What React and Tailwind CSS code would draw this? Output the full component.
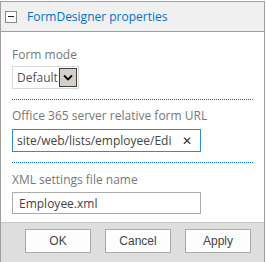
import { useState } from "react";

const font = { fontFamily: '"Open Sans", "Liberation Sans", sans-serif' };

const Dots = () => (
  <div className="w-[241px] h-px bg-[linear-gradient(to_right,#0072c6_1px,transparent_1px)] bg-[length:2px_1px]" />
);

export default function App() {
  const [mode, setMode] = useState("Default");
  const [url, setUrl] = useState("site/web/lists/employee/Edi");
  const [xml, setXml] = useState("Employee.xml");

  return (
    <div
      className="mt-px w-[265px] h-[261px] bg-white border-x border-t border-[#a0a0a0] flex flex-col"
      style={font}
    >
      {/* header */}
      <div className="h-[30px] bg-[#f0f0f0] border-b border-[#a0a0a0] flex items-center pl-[4px]">
        <div className="w-[12px] h-[12px] border border-[#8a8a8a] bg-white flex items-center justify-center">
          <div className="w-[6px] h-px bg-[#222]" />
        </div>
        <span className="ml-[10px] text-[12px] text-[#0072c6] leading-none">
          FormDesigner properties
        </span>
      </div>

      {/* body */}
      <div className="flex-1 pl-[11px] flex flex-col">
        <div className="mt-[14px] text-[12px] leading-[17px] text-[#777]">Form mode</div>
        <div className="mt-[3px] w-[67px] h-[23px] border border-[#d8d8d8] flex items-center">
          <span className="pl-[4px] text-[12px] text-[#555] flex-1">{mode}</span>
          <button
            className="w-[18px] h-[19px] mr-px bg-[#d4d0c8] border border-[#404040] flex items-center justify-center"
            onClick={() => setMode(mode)}
          >
            <svg width="10" height="7" viewBox="0 0 10 7">
              <path d="M1 1.5 L5 5.5 L9 1.5" fill="none" stroke="#000" strokeWidth="1.8" />
            </svg>
          </button>
        </div>

        <div className="mt-[10px]">
          <Dots />
        </div>

        <div className="mt-[7px] text-[12px] leading-[17px] text-[#777]">
          Office 365 server relative form URL
        </div>
        <div className="mt-[5px] w-[189px] h-[23px] border border-[#2a8dd4] flex items-center">
          <input
            className="pl-[4px] w-[168px] text-[12px] text-[#444] outline-none bg-transparent"
            value={url}
            onChange={(e) => setUrl(e.target.value)}
          />
          <span className="ml-[1px] text-[12px] text-[#333] leading-none">✕</span>
        </div>

        <div className="mt-[10px]">
          <Dots />
        </div>

        <div className="mt-[8px] text-[12px] leading-[17px] text-[#777]">
          XML settings file name
        </div>
        <input
          className="mt-[4px] w-[189px] h-[22px] border border-[#ababab] pl-[6px] text-[12px] text-[#444] outline-none"
          value={xml}
          onChange={(e) => setXml(e.target.value)}
        />
      </div>

      {/* footer */}
      <div className="h-[40px] bg-[#dedede] border-t border-[#c8c8c8] flex items-start pt-[6px] pl-[24px] gap-[14px]">
        {["OK", "Cancel", "Apply"].map((label) => (
          <button
            key={label}
            className="w-[66px] h-[24px] bg-[#fdfdfd] border border-[#ababab] text-[12px] text-[#444]"
            style={{ fontFamily: '"Liberation Sans", "Open Sans", sans-serif' }}
          >
            {label}
          </button>
        ))}
      </div>
    </div>
  );
}
